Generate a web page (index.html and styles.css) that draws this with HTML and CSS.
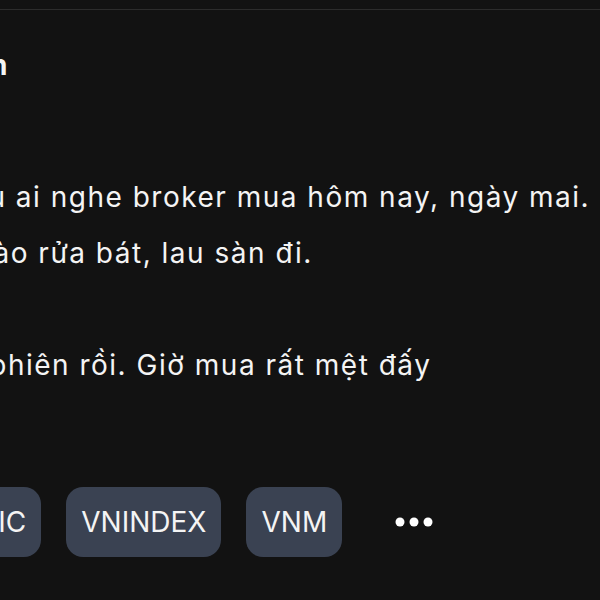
FILE: index.html
```html
<!DOCTYPE html>
<html lang="vi">
<head>
<meta charset="utf-8">
<link rel="stylesheet" href="styles.css">
</head>
<body>
<div class="divider"></div>
<article class="post">
  <div class="author">Nguyễn Văn An</div>
  <div class="content">
    <p class="line line-1">Nếu ai nghe broker mua hôm nay, ngày mai.</p>
    <p class="line line-2">thì vào rửa bát, lau sàn đi.</p>
    <p class="line blank">&nbsp;</p>
    <p class="line line-3">đã phiên rồi. Giờ mua rất mệt đấy</p>
  </div>
  <div class="tags">
    <span class="tag">VIC</span>
    <span class="tag">VNINDEX</span>
    <span class="tag">VNM</span>
    <button class="more" aria-label="More">
      <svg width="38" height="10" viewBox="0 0 38 10"><circle cx="5" cy="5" r="4.5" fill="#fff"/><circle cx="19" cy="5" r="4.5" fill="#fff"/><circle cx="33" cy="5" r="4.5" fill="#fff"/></svg>
    </button>
  </div>
</article>
</body>
</html>
```
FILE: styles.css
```css
html, body {
  margin: 0;
  padding: 0;
  background: #121212;
  overflow: hidden;
  width: 600px;
  height: 600px;
}
body {
  font-family: Inter, "Noto Sans", sans-serif;
  color: #f4f4f4;
}
.divider {
  margin-top: 9px;
  height: 1px;
  background: #2c2c2c;
}
.post {
  display: flex;
  flex-direction: column;
}
.author {
  margin-top: 35px;
  margin-left: -204px;
  font-weight: 700;
  font-size: 28px;
  line-height: 40px;
  white-space: nowrap;
}
.content {
  margin-top: 84px;
  font-size: 28px;
  line-height: 56px;
  letter-spacing: 1.5px;
}
.line {
  margin: 0;
  white-space: nowrap;
}
.line-1 { margin-left: -52px; }
.line-2 { margin-left: -70px; }
.line-3 { margin-left: -56px; }
.tags {
  margin-top: 94px;
  margin-left: -36px;
  display: flex;
  align-items: center;
  gap: 25px;
}
.tag {
  height: 70px;
  box-sizing: border-box;
  padding: 0 15px;
  display: flex;
  align-items: center;
  background: #3a4252;
  border-radius: 17px;
  font-size: 28px;
  color: #f4f4f4;
  white-space: nowrap;
}
.more {
  background: none;
  border: 0;
  padding: 0 0 0 28px;
  display: flex;
  align-items: center;
  cursor: pointer;
}
```
